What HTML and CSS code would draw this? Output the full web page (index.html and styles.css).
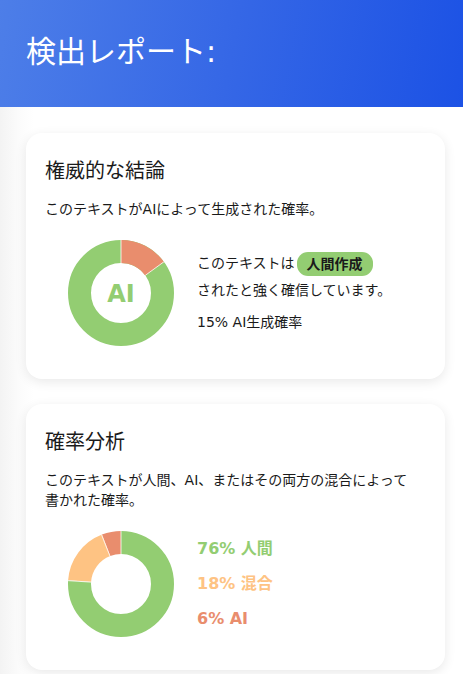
FILE: index.html
```html
<!DOCTYPE html>
<html>
<head>
<meta charset="utf-8">
<title>検出レポート</title>
<link rel="stylesheet" href="styles.css">
</head>
<body>
<header class="header">
  <h1 class="title">検出レポート:</h1>
</header>
<main class="main">
  <section class="card">
    <h2 class="card-title">権威的な結論</h2>
    <p class="card-sub">このテキストがAIによって生成された確率。</p>
    <div class="chart-row">
      <div class="donut">
        <svg class="donut-svg" viewBox="0 0 106 106" width="106" height="106">
          <g transform="rotate(-90 53 53)">
            <circle cx="53" cy="53" r="41.5" fill="none" stroke="#93cd72" stroke-width="23"/>
            <circle cx="53" cy="53" r="41.5" fill="none" stroke="#e98d6d" stroke-width="23" stroke-dasharray="39.11 260.75" stroke-dashoffset="0"/>
          </g>
          <line x1="53" y1="0" x2="53" y2="23" stroke="#fff" stroke-width="0.8"/>
          <line x1="95.88" y1="21.84" x2="77.27" y2="35.36" stroke="#fff" stroke-width="0.8"/>
        </svg>
        <span class="donut-label">AI</span>
      </div>
      <div class="verdict">
        <p class="verdict-line">このテキストは<span class="pill">人間作成</span><br>されたと強く確信しています。</p>
        <p class="verdict-prob">15% AI生成確率</p>
      </div>
    </div>
  </section>

  <section class="card">
    <h2 class="card-title">確率分析</h2>
    <p class="card-sub card-sub-narrow">このテキストが人間、AI、またはその両方の混合によって書かれた確率。</p>
    <div class="chart-row">
      <div class="donut">
        <svg class="donut-svg" viewBox="0 0 106 106" width="106" height="106">
          <g transform="rotate(-90 53 53)">
            <circle cx="53" cy="53" r="41.5" fill="none" stroke="#93cd72" stroke-width="23" stroke-dasharray="198.17 260.75" stroke-dashoffset="0"/>
            <circle cx="53" cy="53" r="41.5" fill="none" stroke="#fec383" stroke-width="23" stroke-dasharray="46.94 260.75" stroke-dashoffset="-198.17"/>
            <circle cx="53" cy="53" r="41.5" fill="none" stroke="#e98d6d" stroke-width="23" stroke-dasharray="15.65 260.75" stroke-dashoffset="-245.11"/>
          </g>
          <line x1="53" y1="0" x2="53" y2="23" stroke="#fff" stroke-width="0.8"/>
          <line x1="0.1" y1="49.67" x2="23.06" y2="51.12" stroke="#fff" stroke-width="0.8"/>
          <line x1="33.5" y1="3.7" x2="41.96" y2="25.1" stroke="#fff" stroke-width="0.8"/>
        </svg>
      </div>
      <ul class="legend">
        <li class="legend-item human">76% 人間</li>
        <li class="legend-item mixed">18% 混合</li>
        <li class="legend-item ai">6% AI</li>
      </ul>
    </div>
  </section>
</main>
</body>
</html>
```

FILE: styles.css
```css
* {
  box-sizing: border-box;
}

html, body {
  margin: 0;
  padding: 0;
}

body {
  font-family: "DejaVu Sans", "Noto Sans CJK JP", sans-serif;
  color: #1a1a1a;
  background: linear-gradient(to right, #f3f3f3 0, #fbfbfb 18px, #ffffff 34px);
  min-height: 674px;
}

.header {
  height: 107px;
  background: linear-gradient(100deg, #4d7ee8 0%, #3567e6 50%, #1c52e5 100%);
  display: flex;
  align-items: center;
  padding: 0 26px 4px;
}

.title {
  margin: 0;
  font-weight: normal;
  font-size: 30px;
  line-height: 40px;
  color: #ffffff;
}

.main {
  padding: 26px 18px 0 26px;
  display: flex;
  flex-direction: column;
  gap: 25px;
}

.card {
  background: #ffffff;
  border-radius: 16px;
  box-shadow: 0 3px 12px rgba(0, 0, 0, 0.09);
  padding: 24px 20px 33px 19px;
}

.card-title {
  margin: 0 0 14px;
  font-size: 20px;
  line-height: 28px;
  font-weight: normal;
}

.card-sub {
  margin: 0;
  font-size: 14px;
  line-height: 20px;
}

.card-sub-narrow {
  padding-right: 8px;
}

.chart-row {
  margin-top: 21px;
  display: flex;
  align-items: center;
  gap: 23px;
  padding-left: 23px;
}

.donut {
  position: relative;
  width: 106px;
  height: 106px;
  flex: none;
}

.donut-svg {
  display: block;
}

.donut-label {
  position: absolute;
  inset: 0;
  display: flex;
  align-items: center;
  justify-content: center;
  font-size: 24px;
  font-weight: bold;
  color: #93cd72;
  padding-top: 2px;
}

.verdict {
  font-size: 14px;
}

.verdict-line {
  margin: 0;
  line-height: 27px;
}

.verdict-prob {
  margin: 5px 0 0;
  line-height: 27px;
}

.pill {
  display: inline-block;
  margin-left: 2px;
  background: #93cd72;
  color: #1a1a1a;
  font-weight: bold;
  font-size: 14px;
  line-height: 20px;
  padding: 2px 10px;
  border-radius: 11px;
  vertical-align: middle;
}

.legend {
  list-style: none;
  margin: 0;
  padding: 0;
  display: flex;
  flex-direction: column;
  gap: 15px;
}

.legend-item {
  font-size: 16px;
  line-height: 20px;
  font-weight: bold;
}

.legend-item.human {
  color: #93cd72;
}

.legend-item.mixed {
  color: #fec383;
}

.legend-item.ai {
  color: #e98d6d;
}
```
